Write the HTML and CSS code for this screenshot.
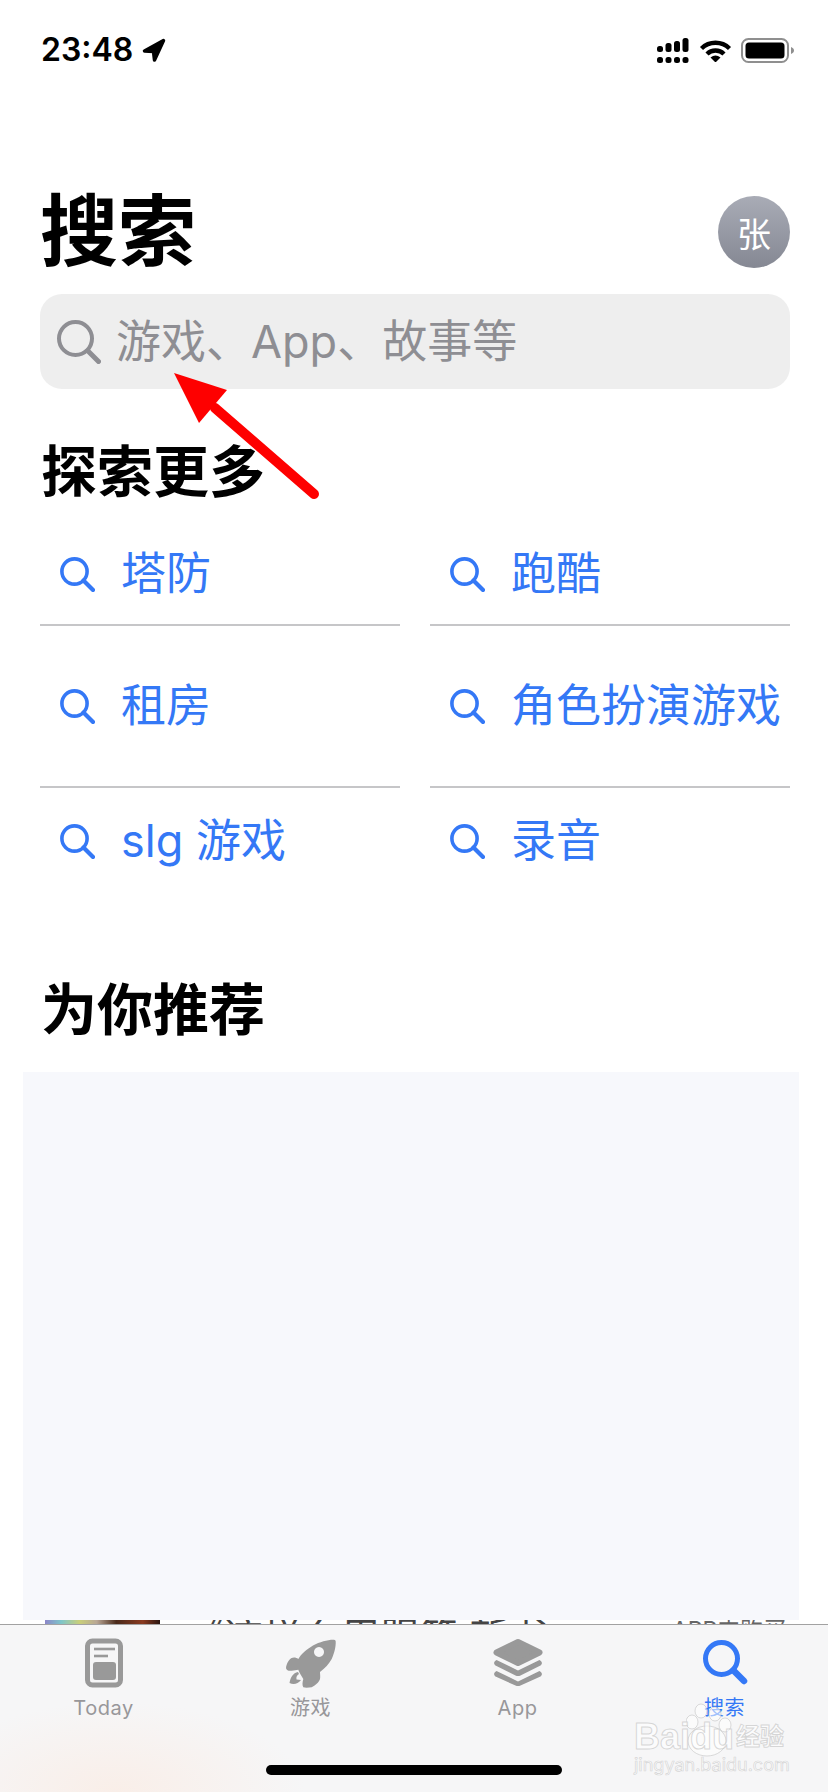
FILE: index.html
```html
<!DOCTYPE html>
<html lang="zh-CN">
<head>
<meta charset="utf-8">
<title>搜索</title>
<link rel="stylesheet" href="styles.css">
</head>
<body>
<div class="screen">
  <div class="status">
    <div class="status-left">
      <span class="time">23:48</span>
      <svg class="nav-arrow" viewBox="0 0 24 24"><polygon points="21.5,2.5 2.5,13 11.5,13.5 12.5,22" /></svg>
    </div>
    <div class="status-right">
      <svg class="signal" viewBox="0 0 33 25">
        <rect x="0" y="8" width="6" height="6" rx="2.5"/><rect x="8.5" y="5" width="6" height="9" rx="2.5"/><rect x="17" y="3" width="6" height="11" rx="2.5"/><rect x="25.5" y="0" width="6" height="14" rx="2.5"/>
        <rect x="0" y="19" width="6" height="6" rx="2.5"/><rect x="8.5" y="19" width="6" height="6" rx="2.5"/><rect x="17" y="19" width="6" height="6" rx="2.5"/><rect x="25.5" y="19" width="6" height="6" rx="2.5"/>
      </svg>
      <svg class="wifi" viewBox="0 0 33 23">
        <path class="wifi-arc" d="M2.5 9.5A20 20 0 0 1 30.5 9.5"/>
        <path class="wifi-arc" d="M8 15A12 12 0 0 1 25 15"/>
        <path d="M11.5 18.5Q16.5 14.5 21.5 18.5L16.5 23.5Z"/>
      </svg>
      <svg class="battery" viewBox="0 0 53 25">
        <rect class="battery-shell" x="1" y="1" width="46" height="23" rx="6.5"/>
        <rect x="4.5" y="4.5" width="39" height="16" rx="3.5"/>
        <path class="battery-nub" d="M50 9C52 10 53 11 53 12.5C53 14 52 15 50 16Z"/>
      </svg>
    </div>
  </div>

  <header class="page-head">
    <h1 class="page-title">搜索</h1>
    <div class="avatar">张</div>
  </header>

  <div class="search-bar">
    <svg class="search-bar-icon" viewBox="0 0 44 44"><circle cx="18.5" cy="18.5" r="16.5"/><line x1="31" y1="31" x2="41.5" y2="41.5"/></svg>
    <span class="search-placeholder">游戏、App、故事等</span>
  </div>

  <h2 class="section-title explore-title">探索更多</h2>

  <div class="suggestions">
    <div class="suggestion with-line"><svg class="s-icon" viewBox="0 0 35 35"><circle cx="14.5" cy="14.5" r="12.6"/><line x1="23.5" y1="23.5" x2="33" y2="33"/></svg><span>塔防</span></div>
    <div class="suggestion with-line"><svg class="s-icon" viewBox="0 0 35 35"><circle cx="14.5" cy="14.5" r="12.6"/><line x1="23.5" y1="23.5" x2="33" y2="33"/></svg><span>跑酷</span></div>
    <div class="suggestion with-line"><svg class="s-icon" viewBox="0 0 35 35"><circle cx="14.5" cy="14.5" r="12.6"/><line x1="23.5" y1="23.5" x2="33" y2="33"/></svg><span>租房</span></div>
    <div class="suggestion with-line"><svg class="s-icon" viewBox="0 0 35 35"><circle cx="14.5" cy="14.5" r="12.6"/><line x1="23.5" y1="23.5" x2="33" y2="33"/></svg><span>角色扮演游戏</span></div>
    <div class="suggestion"><svg class="s-icon" viewBox="0 0 35 35"><circle cx="14.5" cy="14.5" r="12.6"/><line x1="23.5" y1="23.5" x2="33" y2="33"/></svg><span>slg 游戏</span></div>
    <div class="suggestion"><svg class="s-icon" viewBox="0 0 35 35"><circle cx="14.5" cy="14.5" r="12.6"/><line x1="23.5" y1="23.5" x2="33" y2="33"/></svg><span>录音</span></div>
  </div>

  <h2 class="section-title recommend-title">为你推荐</h2>

  <div class="ad-panel"></div>

  <div class="peek">
    <div class="peek-thumb"></div>
    <div class="peek-name">《这样么用服籍·新书</div>
    <div class="peek-sub">APP内购买</div>
  </div>

  <nav class="tabbar">
    <div class="tabs">
      <div class="tab">
        <svg class="tab-icon" viewBox="0 0 50 50">
          <rect class="today-frame" x="8.5" y="3" width="33" height="44" rx="5"/>
          <line class="today-line" x1="15" y1="11" x2="36" y2="11"/>
          <line class="today-line" x1="15" y1="18" x2="29" y2="18"/>
          <rect x="14" y="24" width="23" height="18" rx="3"/>
        </svg>
        <span class="tab-label">Today</span>
      </div>
      <div class="tab">
        <svg class="tab-icon" viewBox="0 0 50 50">
          <path fill-rule="evenodd" d="M48 1.7C42 1.5 34 3.7 27 7.5C21 11 15 16 12.3 21C9 18.5 5 19 2.5 23C1 25.5 0 28 0 30.3C1 33 3 33 5.7 32.7C8 32.3 10.5 32 12.3 31.7C13.5 35 15.5 38 17.3 41C16.5 44 16 47 17.3 49.3C20 50 23 49.5 25.7 49.3C29 47.5 33 44.5 34 41C34.5 38.5 34 36 34 34C39 30 43 26 45.7 21C48.5 15 50 8 49.7 3.5C49.6 2.4 49 1.8 48 1.7ZM33 9a5 5 0 1 0 .01 0Z"/>
          <path class="rocket-gap" d="M12 34C7 35 4.5 39.5 3.5 45C8 47.5 12 45.5 15 42L10.5 41.5C10 39 11 37 13 36Z"/>
        </svg>
        <span class="tab-label">游戏</span>
      </div>
      <div class="tab">
        <svg class="tab-icon" viewBox="0 0 50 50">
          <polygon class="stack-top" points="25,4 46.5,14.5 25,25 3.5,14.5"/>
          <path d="M3.5 22L25 32.5L46.5 22C49.5 23.5 49.5 26 47.5 27.5L27.5 37.5Q25 38.5 22.5 37.5L2.5 27.5C.5 26 .5 23.5 3.5 22Z"/>
          <path d="M3.5 33L25 43.5L46.5 33C49.5 34.5 49.5 37 47.5 38.5L27.5 47.5Q25 48.5 22.5 47.5L2.5 38.5C.5 37 .5 34.5 3.5 33Z"/>
        </svg>
        <span class="tab-label">App</span>
      </div>
      <div class="tab tab-active">
        <svg class="tab-icon search-tab-icon" viewBox="0 0 50 50"><circle cx="21.5" cy="20.5" r="16"/><line x1="33.5" y1="32.5" x2="44" y2="43"/></svg>
        <span class="tab-label">搜索</span>
      </div>
    </div>
    <div class="home-indicator"></div>
  </nav>

  <svg class="red-arrow" viewBox="0 0 160 140">
    <line x1="50" y1="43" x2="149" y2="129"/>
    <polygon points="9,8 62,25 34,58"/>
  </svg>

  <div class="watermark">
    <svg class="paw" viewBox="0 0 60 60">
      <ellipse cx="15" cy="8" rx="6" ry="7"/><ellipse cx="6" cy="19" rx="6" ry="7"/><ellipse cx="29" cy="11" rx="6" ry="7"/><ellipse cx="39" cy="22" rx="6" ry="7"/><ellipse cx="21" cy="38" rx="19" ry="15"/>
    </svg>
    <div class="wm-main"><span class="wm-baidu">Baidu</span><span class="wm-jy">经验</span></div>
    <div class="wm-url">jingyan.baidu.com</div>
  </div>
</div>
</body>
</html>
```
FILE: styles.css
```css
* { box-sizing: border-box; }
html, body { margin: 0; padding: 0; background: #fff; }
body { font-family: "Inter", "Noto Sans CJK SC", sans-serif; }

.screen {
  position: relative;
  width: 828px;
  height: 1792px;
  overflow: hidden;
  display: flex;
  flex-direction: column;
  background: #fff;
}

/* status bar */
.status {
  height: 100px;
  padding: 0 34px 0 41px;
  display: flex;
  align-items: center;
  justify-content: space-between;
  flex: none;
}
.status-left { display: flex; align-items: center; gap: 9px; }
.time { font-size: 32px; font-weight: 600; line-height: 24px; color: #000; font-family: "Inter", sans-serif; }
.nav-arrow { width: 24px; height: 24px; }
.nav-arrow polygon { fill: #000; stroke: #000; stroke-width: 3.5; stroke-linejoin: round; }
.status-right { display: flex; align-items: center; gap: 9px; }
.signal { width: 33px; height: 25px; fill: #000; }
.wifi { width: 33px; height: 23px; fill: #000; }
.wifi-arc { fill: none; stroke: #000; stroke-width: 4.4; }
.battery { width: 53px; height: 25px; fill: #000; }
.battery-shell { fill: none; stroke: #8f8f8f; stroke-width: 2; }
.battery-nub { fill: #8f8f8f; }

/* page header */
.page-head {
  margin-top: 96px;
  height: 72px;
  padding: 0 38px 0 40px;
  display: flex;
  align-items: center;
  justify-content: space-between;
  flex: none;
}
.page-title { margin: 0; font-size: 78px; line-height: 72px; font-weight: 700; color: #000; }
.avatar {
  width: 72px;
  height: 72px;
  border-radius: 50%;
  background: linear-gradient(180deg, #a9acb6, #858893);
  color: #fff;
  font-size: 34px;
  display: flex;
  align-items: center;
  justify-content: center;
}

/* search bar */
.search-bar {
  margin: 26px 38px 0 40px;
  height: 95px;
  background: #eeeeee;
  border-radius: 22px;
  padding: 1px 0 0 17px;
  display: flex;
  align-items: center;
  gap: 15px;
  flex: none;
}
.search-bar-icon { width: 44px; height: 44px; fill: none; stroke: #8e8e93; flex: none; }
.search-bar-icon circle { stroke-width: 4; }
.search-bar-icon line { stroke-width: 5; stroke-linecap: round; }
.search-placeholder { font-size: 45px; line-height: 60px; color: #8e8e93; }

/* headings */
.section-title {
  margin: 0;
  padding-left: 41px;
  height: 60px;
  font-size: 56px;
  line-height: 60px;
  font-weight: 700;
  color: #000;
  flex: none;
}
.explore-title { margin-top: 53px; }
.recommend-title { margin-top: 86px; }

/* suggestions */
.suggestions {
  margin: 22px 38px 0 40px;
  display: grid;
  grid-template-columns: 360px 360px;
  grid-template-rows: 102px 162px 106px;
  column-gap: 30px;
  flex: none;
}
.suggestion {
  display: flex;
  align-items: center;
  gap: 26px;
  padding-left: 20px;
  color: #3478f6;
  font-size: 45px;
  line-height: 60px;
  white-space: nowrap;
}
.with-line { border-bottom: 2px solid #c6c6c8; }
.s-icon { width: 35px; height: 35px; fill: none; stroke: #3478f6; flex: none; }
.s-icon circle { stroke-width: 3.6; }
.s-icon line { stroke-width: 4.2; stroke-linecap: round; }

/* recommendation area */
.ad-panel {
  margin: 32px 29px 0 23px;
  height: 548px;
  background: #f7f8fc;
  flex: none;
}
.peek {
  height: 4px;
  overflow: hidden;
  display: flex;
  align-items: flex-start;
  padding-left: 45px;
  flex: none;
}
.peek-thumb {
  width: 115px;
  height: 4px;
  background: linear-gradient(90deg, #8d86c9 0, #7ec5c9 14%, #c9cf7a 30%, #b9a795 45%, #4a2a1a 62%, #8a3a20 85%, #2a1510 100%);
  flex: none;
}
.peek-name { margin-left: 25px; width: 400px; font-size: 39px; line-height: 32px; color: #444; white-space: nowrap; flex: none; }
.peek-sub { margin-left: 87px; font-size: 23px; line-height: 21px; color: #666; white-space: nowrap; }

/* tab bar */
.tabbar {
  flex: 1;
  border-top: 1px solid #a2a2a2;
  background:
    radial-gradient(ellipse 190px 90px at 115px 167px, #f9eee8 0, rgba(249, 238, 232, 0) 100%),
    #f6f6f7;
  display: flex;
  flex-direction: column;
}
.tabs { display: grid; grid-template-columns: repeat(4, 207px); padding-top: 13px; }
.tab { display: flex; flex-direction: column; align-items: center; }
.tab-icon { width: 50px; height: 50px; fill: #999; }
.tab-label { margin-top: 6px; font-size: 20px; line-height: 28px; color: #98979a; letter-spacing: .5px; }
.today-frame { fill: none; stroke: #999; stroke-width: 5; }
.today-line { stroke: #999; stroke-width: 2.6; }
.rocket-gap { fill: #999; }
.stack-top { stroke: #999; stroke-width: 6; stroke-linejoin: round; }
.search-tab-icon { fill: none; stroke: #3478f6; }
.search-tab-icon circle { stroke-width: 5; }
.search-tab-icon line { stroke-width: 6.5; stroke-linecap: round; }
.tab-active .tab-label { color: #3478f6; }
.home-indicator {
  margin: 43px 0 0 266px;
  width: 296px;
  height: 10px;
  border-radius: 5px;
  background: #000;
}

/* overlays */
.red-arrow { position: absolute; left: 165px; top: 365px; width: 160px; height: 140px; }
.red-arrow line { stroke: #fe0000; stroke-width: 10; stroke-linecap: round; }
.red-arrow polygon { fill: #fe0000; }

.watermark { position: absolute; left: 634px; top: 1703px; width: 160px; height: 72px; }
.paw { position: absolute; left: 52px; top: 0; width: 60px; height: 60px; fill: rgba(255, 255, 255, .55); stroke: rgba(190, 190, 190, .55); stroke-width: 1; }
.wm-main { position: absolute; left: 0; top: 14px; display: flex; align-items: center; gap: 2px; white-space: nowrap; }
.wm-baidu { font-family: "Liberation Sans", sans-serif; font-weight: 700; font-size: 36px; line-height: 40px; color: rgba(255, 255, 255, .65); -webkit-text-stroke: 1px rgba(190, 190, 190, .6); }
.wm-jy { font-size: 24px; font-weight: 700; line-height: 40px; color: rgba(255, 255, 255, .65); -webkit-text-stroke: 1px rgba(190, 190, 190, .6); }
.wm-url { position: absolute; left: 0; top: 52px; font-size: 18px; line-height: 20px; color: rgba(255, 255, 255, .6); -webkit-text-stroke: .7px rgba(190, 190, 190, .6); white-space: nowrap; }
```
